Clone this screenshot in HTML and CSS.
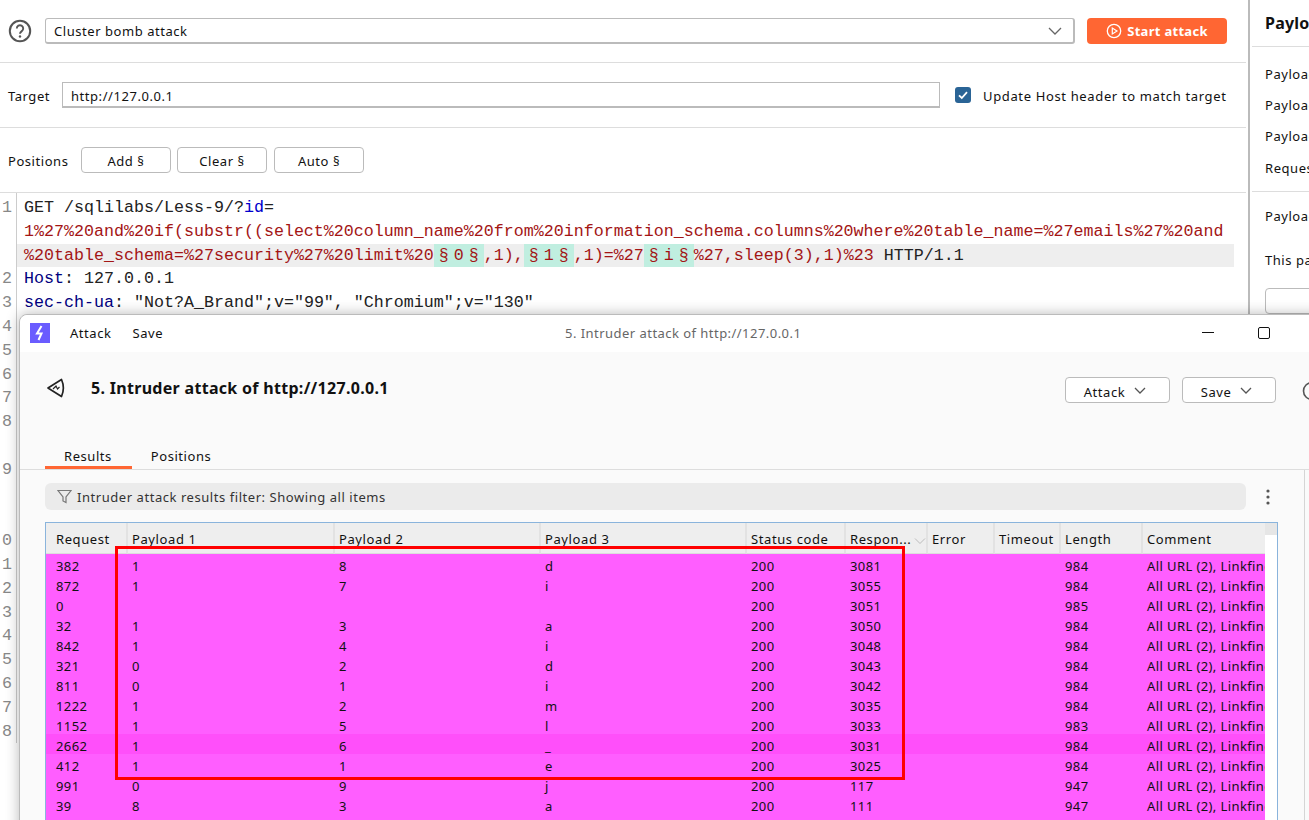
FILE: index.html
```html
<!DOCTYPE html>
<html lang="en">
<head>
<meta charset="utf-8">
<title>Intruder</title>
<link rel="stylesheet" href="styles.css">
</head>
<body>
<div class="app">
  <main class="config">
    <div class="row row-top">
      <svg class="help" width="24" height="24" viewBox="0 0 24 24"><circle cx="12" cy="12" r="10.2" fill="none" stroke="#555" stroke-width="2"/><path d="M8.8 9.4a3.2 3.2 0 1 1 5 2.7c-1.100.8-1.800 1.300-1.800 2.600" fill="none" stroke="#555" stroke-width="1.900"/><circle cx="12" cy="17.500" r="1.200" fill="#555"/></svg>
      <div class="select"><span>Cluster bomb attack</span><svg width="14" height="8" viewBox="0 0 14 8"><path d="M1 1l6 6 6-6" fill="none" stroke="#666" stroke-width="1.300"/></svg></div>
      <button class="start"><svg width="16" height="16" viewBox="0 0 16 16"><circle cx="8" cy="8" r="6.700" fill="none" stroke="#fff" stroke-width="1.300"/><path d="M6.300 5v6l4.700-3z" fill="none" stroke="#fff" stroke-width="1.200"/></svg>Start attack</button>
    </div>
    <div class="row row-target">
      <label class="lbl lbl-target">Target</label>
      <div class="input">http://127.0.0.1</div>
      <span class="check"><svg width="12" height="12" viewBox="0 0 12 12"><path d="M2 6.300l2.800 2.700L10 3.200" fill="none" stroke="#fff" stroke-width="1.800"/></svg></span>
      <span class="lbl lbl-host">Update Host header to match target</span>
    </div>
    <div class="row row-pos">
      <label class="lbl lbl-pos">Positions</label>
      <button class="btn">Add §</button>
      <button class="btn">Clear §</button>
      <button class="btn btn-auto">Auto §</button>
    </div>
    <div class="editor">
      <div class="gutter">
        <div>1</div><div></div><div></div><div>2</div><div>3</div><div>4</div><div>5</div><div>6</div><div>7</div><div>8</div><div></div><div>9</div><div></div><div></div><div>0</div><div>1</div><div>2</div><div>3</div><div>4</div><div>5</div><div>6</div><div>7</div><div>8</div>
      </div>
      <div class="code">
        <div>GET /sqlilabs/Less-9/?<span class="k">id</span>=</div>
        <div class="v">1%27%20and%20if(substr((select%20column_name%20from%20information_schema.columns%20where%20table_name=%27emails%27%20and</div>
        <div class="hl"><span class="v">%20table_schema=%27security%27%20limit%20<span class="mark"><span class="sec">§</span>0<span class="sec">§</span></span>,1),<span class="mark"><span class="sec">§</span>1<span class="sec">§</span></span>,1)=%27<span class="mark"><span class="sec">§</span>i<span class="sec">§</span></span>%27,sleep(3),1)%23</span> HTTP/1.1</div>
        <div><span class="n">Host</span>: 127.0.0.1</div>
        <div><span class="n">sec-ch-ua</span>: "Not?A_Brand";v="99", "Chromium";v="130"</div>
      </div>
    </div>
  </main>
  <aside class="side">
    <h2 class="side-title">Payload sets</h2>
    <div class="side-list">
      <div>Payload set:</div>
      <div>Payload type:</div>
      <div>Payload count:</div>
      <div>Request count:</div>
    </div>
    <div class="side-opts">
      <div>Payload settings</div>
      <div class="side-note">This payload type</div>
      <div class="side-btn"></div>
    </div>
  </aside>
</div>

<section class="window">
  <div class="titlebar">
    <span class="logo"><svg width="20" height="20" viewBox="0 0 20 20"><path d="M11.500 3L7 10.500h4.500L8.500 17" fill="none" stroke="#fff" stroke-width="2"/></svg></span>
    <span class="menu menu-attack">Attack</span>
    <span class="menu">Save</span>
    <span class="win-title">5. Intruder attack of http://127.0.0.1</span>
    <span class="win-min"></span>
    <span class="win-max"></span>
  </div>
  <div class="head">
    <svg class="kite" width="18" height="20" viewBox="0 0 18 20"><path d="M1 10L14.500 1.500c2.200 5 2.400 11.500 0 17z" fill="none" stroke="#222" stroke-width="1.700" stroke-linejoin="round"/><path d="M6 11l3 -3 1.500 3 2-2" fill="none" stroke="#222" stroke-width="1.100"/></svg>
    <h1 class="head-title">5. Intruder attack of http://127.0.0.1</h1>
    <button class="btn drop drop-attack"><span class="drop-text">Attack</span><svg width="12" height="7" viewBox="0 0 12 7"><path d="M1 1l5 5 5-5" fill="none" stroke="#555" stroke-width="1.300"/></svg></button>
    <button class="btn drop drop-save"><span class="drop-text">Save</span><svg width="12" height="7" viewBox="0 0 12 7"><path d="M1 1l5 5 5-5" fill="none" stroke="#555" stroke-width="1.300"/></svg></button>
    <svg class="head-help" width="20" height="20" viewBox="0 0 20 20"><circle cx="10" cy="10" r="8.500" fill="none" stroke="#555" stroke-width="1.600"/></svg>
  </div>
  <div class="tabs">
    <span class="tab tab-on">Results</span>
    <span class="tab">Positions</span>
  </div>
  <div class="filter-row">
    <div class="filter"><svg width="15" height="15" viewBox="0 0 15 15"><path d="M1 1.500h13L9 8v5.500L6 12V8z" fill="none" stroke="#777" stroke-width="1.200"/></svg>Intruder attack results filter: Showing all items</div>
    <svg class="dots" width="4" height="16" viewBox="0 0 4 16"><circle cx="2" cy="2" r="1.600" fill="#555"/><circle cx="2" cy="8" r="1.600" fill="#555"/><circle cx="2" cy="14" r="1.600" fill="#555"/></svg>
  </div>
  <div class="table-wrap">
    <table class="results">
      <colgroup><col class="c1"><col class="c2"><col class="c3"><col class="c4"><col class="c5"><col class="c6"><col class="c7"><col class="c8"><col class="c9"><col class="c10"></colgroup>
      <thead><tr><th>Request</th><th>Payload 1</th><th>Payload 2</th><th>Payload 3</th><th>Status code</th><th>Respon...<svg class="sort" width="12" height="6" viewBox="0 0 12 6"><path d="M1 .5l5 5 5-5" fill="none" stroke="#bbb"/></svg></th><th>Error</th><th>Timeout</th><th>Length</th><th>Comment</th></tr></thead>
      <tbody>
        <tr><td>382</td><td>1</td><td>8</td><td>d</td><td>200</td><td>3081</td><td></td><td></td><td>984</td><td>All URL (2), Linkfinder (1)</td></tr>
        <tr><td>872</td><td>1</td><td>7</td><td>i</td><td>200</td><td>3055</td><td></td><td></td><td>984</td><td>All URL (2), Linkfinder (1)</td></tr>
        <tr><td>0</td><td></td><td></td><td></td><td>200</td><td>3051</td><td></td><td></td><td>985</td><td>All URL (2), Linkfinder (1)</td></tr>
        <tr><td>32</td><td>1</td><td>3</td><td>a</td><td>200</td><td>3050</td><td></td><td></td><td>984</td><td>All URL (2), Linkfinder (1)</td></tr>
        <tr><td>842</td><td>1</td><td>4</td><td>i</td><td>200</td><td>3048</td><td></td><td></td><td>984</td><td>All URL (2), Linkfinder (1)</td></tr>
        <tr><td>321</td><td>0</td><td>2</td><td>d</td><td>200</td><td>3043</td><td></td><td></td><td>984</td><td>All URL (2), Linkfinder (1)</td></tr>
        <tr><td>811</td><td>0</td><td>1</td><td>i</td><td>200</td><td>3042</td><td></td><td></td><td>984</td><td>All URL (2), Linkfinder (1)</td></tr>
        <tr><td>1222</td><td>1</td><td>2</td><td>m</td><td>200</td><td>3035</td><td></td><td></td><td>984</td><td>All URL (2), Linkfinder (1)</td></tr>
        <tr><td>1152</td><td>1</td><td>5</td><td>l</td><td>200</td><td>3033</td><td></td><td></td><td>983</td><td>All URL (2), Linkfinder (1)</td></tr>
        <tr class="sel"><td>2662</td><td>1</td><td>6</td><td>_</td><td>200</td><td>3031</td><td></td><td></td><td>984</td><td>All URL (2), Linkfinder (1)</td></tr>
        <tr><td>412</td><td>1</td><td>1</td><td>e</td><td>200</td><td>3025</td><td></td><td></td><td>984</td><td>All URL (2), Linkfinder (1)</td></tr>
        <tr><td>991</td><td>0</td><td>9</td><td>j</td><td>200</td><td>117</td><td></td><td></td><td>947</td><td>All URL (2), Linkfinder (1)</td></tr>
        <tr><td>39</td><td>8</td><td>3</td><td>a</td><td>200</td><td>111</td><td></td><td></td><td>947</td><td>All URL (2), Linkfinder (1)</td></tr>
        <tr><td colspan="10"></td></tr>
      </tbody>
    </table>
    <div class="scroll"><div class="scroll-top"></div></div>
  </div>
  <div class="rail"></div>
</section>

<div class="redbox"></div>
</body>
</html>
```

FILE: styles.css
```css
* { box-sizing: border-box; }
html, body { margin: 0; height: 820px; overflow: hidden; background: #fff; }
body { font: 13px/18px "Noto Sans", sans-serif; letter-spacing: .55px; color: #111; position: relative; }
button { font: inherit; letter-spacing: inherit; color: inherit; padding: 0; }

.app { display: flex; width: 1309px; height: 820px; }
.config { width: 1246px; flex: none; }
.row { display: flex; align-items: center; padding-left: 8px; border-bottom: 1px solid #ddd; }
.row-top { height: 63px; }
.row-target, .row-pos { height: 65px; }
.lbl { padding-top: 2px; }
.lbl-host { letter-spacing: .64px; }

.help { flex: none; }
.select { width: 1030px; height: 26px; margin-left: 13px; margin-right: 12px; border: 1px solid #bbb; border-bottom-width: 2px; border-right-width: 2px; border-radius: 3px; display: flex; align-items: center; justify-content: space-between; padding: 0 11px 0 8px; }
.start { width: 140px; height: 26px; background: #ff6633; color: #fff; border: 0; border-radius: 4px; font-weight: 700; letter-spacing: .3px; display: flex; align-items: center; justify-content: center; gap: 5px; }

.lbl-target { width: 54px; }
.input { width: 878px; height: 26px; border: 1px solid #bbb; border-bottom-width: 2px; padding: 4px 8px 0; margin-right: 15px; }
.check { width: 16px; height: 16px; border-radius: 3px; background: #2a6496; display: flex; align-items: center; justify-content: center; margin-right: 12px; }

.lbl-pos { width: 73px; }
.btn { width: 90px; height: 26px; background: #fff; border: 1px solid #bbb; border-radius: 4px; margin-right: 6px; padding-top: 2px; }
.btn-auto { margin-left: 1px; }

.editor { display: flex; font: 16.67px/23.8px "Liberation Mono", monospace; letter-spacing: 0; padding-top: 3px; }
.gutter { width: 17px; flex: none; border-right: 1px solid #ccc; color: #888; padding-left: 2px; margin-top: -3px; padding-top: 3px; }
.gutter div { height: 23.8px; }
.code { width: 1217px; margin-left: 0; color: #222; }
.code > div { padding-left: 7px; white-space: nowrap; }
.k { color: #0000cc; }
.n { color: #000080; }
.v { color: #a31515; }
.hl { background: #eee; }
.mark { background: #c0eee0; display: inline-block; }
.sec { display: inline-block; width: 20px; text-align: center; }

.side { flex: none; width: 63px; margin-left: 2px; border-left: 2px solid #bbb; padding-left: 2px; overflow: hidden; white-space: nowrap; }
.side-title { font-size: 16px; line-height: 46px; height: 47px; margin: 0; padding-left: 13px; border-bottom: 1px solid #ddd; width: 100px; font-weight: 700; letter-spacing: .2px; }
.side-list { height: 145px; border-bottom: 1px solid #ddd; padding: 18px 0 0 13px; width: 100px; }
.side-list div { height: 31.2px; }
.side-opts { padding: 15px 0 0 13px; }
.side-note { margin-top: 26px; }
.side-btn { width: 90px; height: 26px; border: 1px solid #bbb; border-radius: 4px; margin-top: 19px; }

.window { position: absolute; left: 19px; top: 314px; width: 1330px; height: 520px; background: #fafafa; border: 1px solid #bbb; border-radius: 8px 8px 0 0; box-shadow: 0 0 14px rgba(0,0,0,.28); }
.titlebar { height: 37px; background: #fff; border-radius: 8px 8px 0 0; display: flex; align-items: center; padding: 0 0 2px 10px; }
.logo { width: 20px; height: 20px; background: #6a5cff; display: flex; margin-right: 20px; }
.menu-attack { margin-right: 21px; }
.win-title { color: #666; margin-left: 402px; width: 400px; letter-spacing: .46px; }
.win-min { width: 12px; height: 1px; background: #111; margin-left: 237px; }
.win-max { width: 12px; height: 12px; border: 1.500px solid #111; border-radius: 2px; margin-left: 44px; }

.head { height: 78px; display: flex; align-items: flex-start; padding-left: 27px; position: relative; }
.kite { margin-top: 26px; }
.head-title { margin: 25px 0 0 26px; font-size: 16px; line-height: 22px; font-weight: 700; letter-spacing: .3px; width: 974px; }
.drop { margin-top: 25px; display: flex; align-items: center; justify-content: center; gap: 9px; padding: 0 5px 0 0; }
.drop-text { padding-top: 4px; }
.drop-attack { width: 105px; margin-right: 12px; }
.drop-save { width: 94px; margin-right: 26px; }
.head-help { margin-top: 29px; flex: none; }

.tabs { height: 40px; border-bottom: 1px solid #ddd; display: flex; padding-left: 25px; }
.tab { height: 39px; padding: 17px 19px 0; }
.tab-on { border-bottom: 3px solid #ff6633; padding-right: 20px; }

.filter-row { display: flex; align-items: center; padding: 13px 0 0 25px; }
.filter { width: 1201px; height: 27px; background: #ebebeb; border-radius: 6px; display: flex; align-items: center; gap: 5px; padding-left: 12px; color: #333; }
.dots { margin-left: 20px; }

.table-wrap { display: flex; width: 1233px; margin: 12px 0 0 25px; border: 1px solid #8ab4dc; background: #fff; height: 300px; }
.results { width: 1219px; flex: none; table-layout: fixed; border-collapse: separate; border-spacing: 0; background: #ff5eff; letter-spacing: .4px; }
.c1 { width: 82px; } .c2 { width: 207px; } .c3, .c4 { width: 206px; } .c5 { width: 99px; } .c6 { width: 82px; } .c7 { width: 67px; } .c8 { width: 66px; } .c9 { width: 82px; } .c10 { width: 122px; }
.results th { height: 31px; padding: 1px 0 0 4px; background: #eee; font-weight: 400; text-align: left; white-space: nowrap; overflow: hidden; border-right: 2px solid #e2e2e2; border-bottom: 1px solid #ddd; letter-spacing: .6px; }
.results th:first-child, .results td:first-child { padding-left: 10px; }
.results th:last-child { border-right: 0; }
.results td { height: 20px; padding: 4px 0 0 4px; line-height: 16px; white-space: nowrap; overflow: hidden; }
.results tr.sel td { background: #ff4ffa; }
.sort { margin-left: 3px; }
.scroll { flex: 1; }
.scroll-top { height: 12px; background: #e6e6e6; }
.rail { position: absolute; left: 1284px; top: 155px; width: 1px; height: 400px; background: #d5d5d5; }

.redbox { position: absolute; left: 115px; top: 546px; width: 790px; height: 234px; border: 3px solid #f00; }
```
